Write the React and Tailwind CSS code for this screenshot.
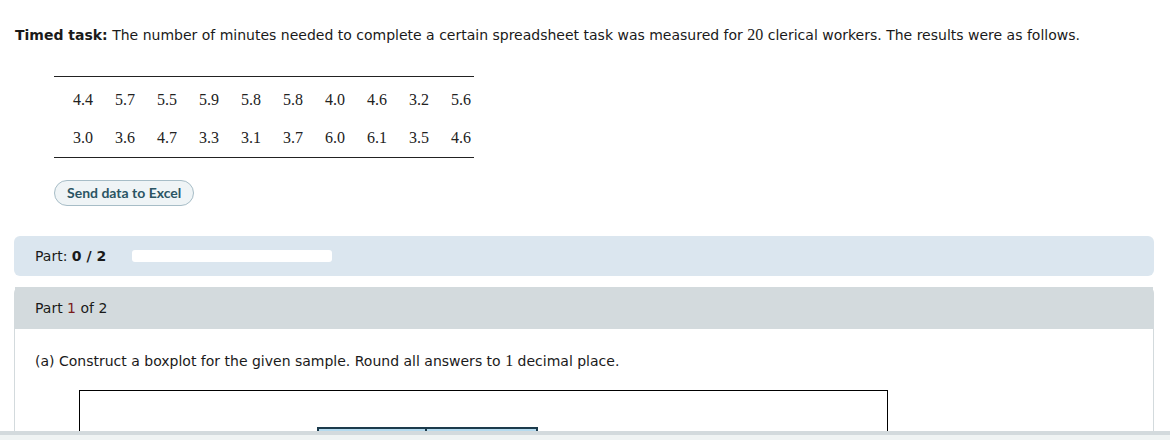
import React from "react";

const rows = [
  ["4.4", "5.7", "5.5", "5.9", "5.8", "5.8", "4.0", "4.6", "3.2", "5.6"],
  ["3.0", "3.6", "4.7", "3.3", "3.1", "3.7", "6.0", "6.1", "3.5", "4.6"],
];

const sans = "font-['DejaVu_Sans',Verdana,sans-serif]";
const serif = "font-['Liberation_Serif','Times_New_Roman',serif]";

export default function App() {
  return (
    <div className={`relative h-[440px] overflow-hidden bg-white pl-[14px] pr-[16px] text-[#1a1a1a] ${sans}`}>
      {/* task statement */}
      <p className="pt-[25px] pl-[1px] text-[14px] leading-[20px]">
        <span className="font-bold">Timed task:</span> The number of minutes needed to complete a certain spreadsheet
        task was measured for <span className={`${serif} text-[16px]`}>20</span> clerical workers. The results were as
        follows.
      </p>

      {/* data table */}
      <div className={`ml-[40px] mt-[31px] w-[420px] border-y border-[#222] pt-[4px] pl-[19px] ${serif} text-[16px] text-[#222]`}>
        {rows.map((row, i) => (
          <div key={i} className="grid h-[38px] grid-cols-[repeat(9,42px)_1fr] items-center">
            {row.map((v, j) => (
              <span key={j}>{v}</span>
            ))}
          </div>
        ))}
      </div>

      <button className="ml-[40px] mt-[22px] block h-[26px] rounded-full border border-[#a7bdc7] bg-[#eff4f6] px-[12px] font-['Lato',sans-serif] text-[14px] leading-[24px] font-bold text-[#2b5564]">
        Send data to Excel
      </button>

      {/* progress */}
      <div className="mt-[30px] flex h-[40px] items-center rounded-[6px] bg-[#dbe6ef] pl-[21px] text-[14px]">
        <span>
          Part: <span className="font-bold">0 / 2</span>
        </span>
        <div className="ml-[26px] h-[12px] w-[200px] rounded-[3px] bg-white" />
      </div>

      {/* part panel */}
      <div className="mt-[11px] rounded-t-[6px] border-x border-[#d3dadd]">
        <div className="flex h-[42px] items-center bg-[#d3dadd] pl-[20px] text-[14px]">
          <span>
            Part <span className="text-[#7a1b1b]">1</span> of 2
          </span>
        </div>
        <div className="pl-[20px] pt-[20px]">
          <p className="text-[14px] leading-[24px]">
            (a) Construct a boxplot for the given sample. Round all answers to{" "}
            <span className={`${serif} text-[16px]`}>1</span> decimal place.
          </p>
          <div className="ml-[44px] mt-[17px] h-[80px] w-[809px] border-[1.5px] border-black pt-[36px]">
            <div className="ml-[237px] flex h-[30px] w-[221px]">
              <div className="w-[110px] border-2 border-[#1c3b4c] bg-[#b6dbef]" />
              <div className="w-[111px] border-2 border-l-0 border-[#1c3b4c] bg-[#b6dbef]" />
            </div>
          </div>
        </div>
      </div>

      {/* footer bar overlaying the page */}
      <div className="absolute bottom-0 left-0 right-0 h-[9px] border-t-[4px] border-[#d3dadd] bg-[#eff3f3]" />
    </div>
  );
}
